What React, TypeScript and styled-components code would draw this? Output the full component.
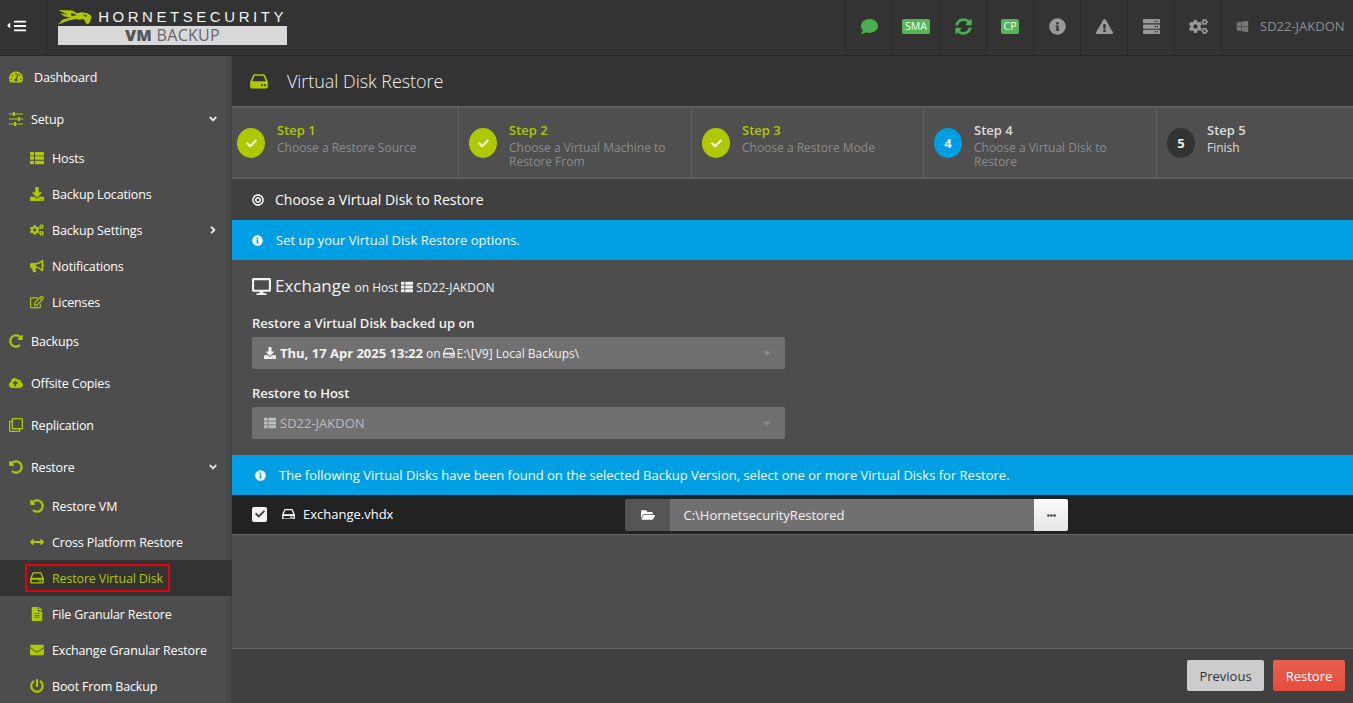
import React from 'react'
import styled, { createGlobalStyle } from 'styled-components'
import {
    FaAngleDown,
    FaAngleRight,
    FaArrowsAltH,
    FaBars,
    FaBullhorn,
    FaBullseye,
    FaCaretDown,
    FaCaretLeft,
    FaCheck,
    FaCloudUploadAlt,
    FaCogs,
    FaComment,
    FaDesktop,
    FaDownload,
    FaEllipsisH,
    FaEnvelope,
    FaExclamationTriangle,
    FaFileAlt,
    FaFolderOpen,
    FaInfoCircle,
    FaPowerOff,
    FaRedoAlt,
    FaRegClone,
    FaRegEdit,
    FaServer,
    FaSyncAlt,
    FaTachometerAlt,
    FaThList,
    FaUndoAlt,
    FaWindows,
} from 'react-icons/fa'

const LIME = '#b0c800'
const BLUE = '#009fe3'
const GREEN = '#4cae4c'

const GlobalStyle = createGlobalStyle`
  html, body {
    margin: 0;
    height: 100%;
    overflow: hidden;
    background: #4d4d4d;
    font-family: "Open Sans", "Liberation Sans", sans-serif;
    font-size: 13px;
    color: #fff;
  }
`

const Page = styled.div`
  width: 1353px;
  height: 703px;
  display: flex;
  flex-direction: column;
  overflow: hidden;
`

const TopBar = styled.header`
  height: 56px;
  flex: none;
  display: flex;
  background: #333;
  border-bottom: 1px solid #2a2a2a;
  box-sizing: border-box;
`

const MenuToggle = styled.div`
  width: 47px;
  display: flex;
  align-items: center;
  justify-content: center;
  font-size: 14px;
  border-right: 1px solid #272727;
  box-sizing: border-box;
  padding: 0 16px 4px 0;

  svg:first-child {
    font-size: 9px;
    margin-right: 0;
  }
`

const Logo = styled.div`
  width: 229px;
  margin: 8px 0 0 11px;
`

const LogoTop = styled.div`
  height: 18px;
  display: flex;
  align-items: center;
  gap: 6px;
`

const LogoName = styled.span`
  font-family: "Liberation Sans", sans-serif;
  font-size: 15px;
  line-height: 18px;
  letter-spacing: 3.55px;
  white-space: nowrap;
  color: #f2f2f2;
`

const LogoBand = styled.div`
  height: 19px;
  background: #d9d9d9;
  color: #666;
  text-align: center;
  font-size: 16px;
  line-height: 18px;
  letter-spacing: 0.3px;

  b {
    font-weight: 800;
    color: #555;
  }
`

const TopCells = styled.div`
  margin-left: auto;
  display: flex;
`

const TopCell = styled.div<{ $color?: string }>`
  width: 47px;
  display: flex;
  align-items: center;
  justify-content: center;
  border-left: 1px solid #292929;
  box-sizing: border-box;
  padding-bottom: 3px;
  font-size: 17px;
  color: ${({ $color }) => $color || '#999'};
`

const HostCell = styled(TopCell)`
  width: 132px;
  justify-content: flex-start;
  padding-left: 14px;
  gap: 11px;
  font-size: 13px;
  color: #8f8f8f;

  svg {
    font-size: 13px;
    color: #777;
  }
`

const Badge = styled.span`
  background: #55b555;
  color: #fff;
  font-size: 10.5px;
  line-height: 15px;
  padding: 0 3px;
  border-radius: 2px;
`

const Content = styled.div`
  flex: 1;
  display: flex;
  min-height: 0;
`

const Sidebar = styled.nav`
  width: 232px;
  flex: none;
  background: #4d4d4d;
  box-shadow: inset -5px 0 5px -4px rgba(0, 0, 0, 0.25);
`

const NavTop = styled.div<{ $indent?: number }>`
  height: 42px;
  display: flex;
  align-items: center;
  padding-left: 9px;
  color: #fff;
  font-size: 12.5px;
  letter-spacing: -0.15px;

  & > svg:first-child {
    width: 14px;
    height: 14px;
    margin-right: ${({ $indent }) => $indent || 8}px;
    color: ${LIME};
  }
`

const NavSub = styled.div<{ $active?: boolean }>`
  height: 36px;
  display: flex;
  align-items: center;
  padding-left: 30px;
  font-size: 12.5px;
  letter-spacing: -0.15px;
  color: ${({ $active }) => ($active ? LIME : '#fff')};
  background: ${({ $active }) => ($active ? '#333' : 'transparent')};
  position: relative;

  & > svg:first-child {
    width: 14px;
    height: 14px;
    margin-right: 8px;
    color: ${LIME};
  }
`

const Highlight = styled.span`
  position: absolute;
  left: 25px;
  top: 4px;
  width: 145px;
  height: 28px;
  box-sizing: border-box;
  border: 2px solid #e8000b;
`

const Chevron = styled.span`
  margin-left: auto;
  margin-right: 13px;
  display: flex;
  color: #e8e8e8;
  font-size: 12px;
`

const Main = styled.main`
  flex: 1;
  min-width: 0;
  display: flex;
  flex-direction: column;
  background: #4d4d4d;
`

const TitleBar = styled.div`
  height: 52px;
  flex: none;
  display: flex;
  align-items: center;
  padding-left: 18px;
  gap: 19px;
  background: #333;
  box-sizing: border-box;
  border-bottom: 2px solid #5e5e5e;
  font-size: 18px;
  font-weight: 300;
  letter-spacing: -0.05px;
  color: #f2f2f2;

  svg {
    width: 18px;
    height: 15px;
    color: ${LIME};
  }
`

const Steps = styled.div`
  height: 71px;
  flex: none;
  display: grid;
  grid-template-columns: 227px 233px 232px 233px 1fr;
  background: #4f4f4f;
  box-sizing: border-box;
  border-bottom: 2px solid #5e5e5e;
`

const Step = styled.div`
  display: flex;
  padding: 14px 0 0 10px;
  gap: 12px;
  border-right: 1px solid #626262;
  box-sizing: border-box;

  &:first-child {
    padding-left: 5px;
  }

  &:last-child {
    border-right: none;
  }
`

const StepDot = styled.div<{ $bg: string }>`
  width: 28px;
  height: 30px;
  margin-top: 6px;
  flex: none;
  border-radius: 50%;
  display: flex;
  align-items: center;
  justify-content: center;
  background: ${({ $bg }) => $bg};
  font-size: 13px;
  font-weight: 700;
  color: #eee;

  svg {
    font-size: 11px;
  }
`

const StepTitle = styled.div<{ $done?: boolean }>`
  font-size: 13px;
  font-weight: 600;
  line-height: 17px;
  color: ${({ $done }) => ($done ? LIME : '#ddd')};
`

const StepText = styled.div<{ $bright?: boolean }>`
  font-size: 12px;
  line-height: 14px;
  margin-top: 2px;
  width: 175px;
  color: ${({ $bright }) => ($bright ? '#ddd' : '#8c8c8c')};
`

const SectionHead = styled.div`
  height: 41px;
  flex: none;
  display: flex;
  align-items: center;
  padding-left: 20px;
  gap: 11px;
  background: #404040;
  font-size: 14px;
  color: #fff;

  svg {
    font-size: 12px;
  }
`

const InfoBar = styled.div<{ $left: number }>`
  height: 40px;
  flex: none;
  display: flex;
  align-items: center;
  padding-left: ${({ $left }) => $left}px;
  gap: 13px;
  background: ${BLUE};
  font-size: 13px;
  color: #f4fbff;

  svg {
    font-size: 11px;
  }
`

const Form = styled.div`
  height: 195px;
  flex: none;
  padding: 14px 20px 0;
  box-sizing: border-box;
`

const VmTitle = styled.div`
  display: flex;
  align-items: baseline;
  height: 25px;
  font-size: 12px;
  color: #f2f2f2;

  svg {
    align-self: center;
  }
`

const VmName = styled.span`
  font-size: 17px;
  margin: 0 4px 0 4px;
`

const HostIcon = styled(FaThList)`
  font-size: 12px;
  margin: 0 3px;
`

const FieldLabel = styled.div`
  font-size: 13px;
  font-weight: 600;
  line-height: 18px;
  color: #f2f2f2;
  margin: 15px 0 5px;
`

const SelectBox = styled.div<{ $disabled?: boolean }>`
  width: 533px;
  height: 32px;
  display: flex;
  align-items: center;
  padding: 0 12px;
  gap: 3px;
  box-sizing: border-box;
  background: #707070;
  border-radius: 2px;
  font-size: ${({ $disabled }) => ($disabled ? '13px' : '12px')};
  color: ${({ $disabled }) => ($disabled ? '#bdbdbd' : '#f2f2f2')};

  b {
    font-size: 13px;
    font-weight: 700;
  }

  svg {
    font-size: 12px;
  }

  & > svg:first-child {
    margin-right: 1px;
  }

  & > svg:last-child {
    margin-left: auto;
    color: #8c8c8c;
  }
`

const SelectDisk = styled.span`
  display: flex;
  margin: 0 -1px;
`

const DiskRow = styled.div`
  height: 40px;
  flex: none;
  display: flex;
  align-items: center;
  padding: 0 0 1px 20px;
  background: #222;
  border-bottom: 1px solid #666;
  box-sizing: border-box;
  font-size: 13px;
`

const CheckBox = styled.span`
  width: 15px;
  height: 15px;
  border-radius: 2px;
  background: #f4f4f4;
  color: #444;
  display: flex;
  align-items: center;
  justify-content: center;
  font-size: 10px;
  margin-right: 15px;
`

const DiskGlyph = styled.span`
  display: flex;
  margin-right: 8px;
`

const PathGroup = styled.div`
  margin: 2px 0 0 232px;
  width: 443px;
  height: 32px;
  display: flex;
  border-radius: 2px;
  overflow: hidden;
`

const PathIcon = styled.span`
  width: 45px;
  background: #555;
  display: flex;
  align-items: center;
  justify-content: center;
  font-size: 14px;
`

const PathInput = styled.span`
  flex: 1;
  background: #707070;
  line-height: 32px;
  padding-left: 13px;
  color: #f2f2f2;
`

const PathButton = styled.span`
  width: 34px;
  background: linear-gradient(#fafafa, #e6e6e6);
  color: #444;
  display: flex;
  align-items: center;
  justify-content: center;
  font-size: 9px;
`

const Spacer = styled.div`
  flex: 1;
`

const Footer = styled.div`
  height: 55px;
  flex: none;
  display: flex;
  justify-content: flex-end;
  align-items: flex-start;
  padding: 11px 8px 0 0;
  gap: 9px;
  box-sizing: border-box;
  background: #404040;
  border-top: 1px solid #666;
`

const Button = styled.button<{ $primary?: boolean }>`
  height: 31px;
  width: ${({ $primary }) => ($primary ? '72px' : '77px')};
  padding: 0;
  border: none;
  border-radius: 2px;
  font-family: inherit;
  font-size: 13px;
  color: ${({ $primary }) => ($primary ? '#fff' : '#333')};
  background: ${({ $primary }) =>
        $primary ? 'linear-gradient(#e8604f, #e54d3a)' : '#cccccc'};
`

const Hornet = () => (
    <svg width="36" height="17" viewBox="0 0 36 17">
        <path
            fill={LIME}
            d="M0.5 0.5 L15 1 L20 4 L25 3 L31 4 L35.5 7 L33.5 14 L30.5 16 L27 10 L23 11 L19 10 L12 11.5 L0 16 L5 10.5 L13 8.5 L7 7.5 L2 4 L10 5.5 Z"
        />
        <path fill="#333" d="M14 3.5 L20 6 L14 7 Z M26 5 L30.5 6 L29.5 8 Z" />
    </svg>
)

const HddIcon = ({ size = 13, solid = false }: { size?: number; solid?: boolean }) => (
    <svg width={size} height={(size * 15) / 18} viewBox="0 0 18 15">
        <path
            fill="none"
            stroke="currentColor"
            strokeWidth="1.7"
            strokeLinejoin="round"
            d="M4 1 H14 L17 8 H1 Z"
        />
        {solid ? (
            <path
                fill="currentColor"
                fillRule="evenodd"
                d="M0.2 8 H17.8 V13 Q17.8 14.6 16 14.6 H2 Q0.2 14.6 0.2 13 Z M11 10.2 V12 H12.8 V10.2 Z M14 10.2 V12 H15.8 V10.2 Z"
            />
        ) : (
            <path
                fill="currentColor"
                fillRule="evenodd"
                d="M0.2 8 H17.8 V13 Q17.8 14.6 16 14.6 H2 Q0.2 14.6 0.2 13 Z M2 9.6 V13 H16 V9.6 Z M11 10.6 H15 V12 H11 Z"
            />
        )}
    </svg>
)

const SlidersIcon = () => (
    <svg viewBox="0 0 14 14">
        <path fill="currentColor" d="M0 1.5 H14 V2.5 H0 Z M0 6.5 H14 V7.5 H0 Z M0 11.5 H14 V12.5 H0 Z" />
        <path fill="currentColor" d="M4 0 H6 V4 H4 Z M9 5 H11 V9 H9 Z M5 10 H7 V14 H5 Z" />
    </svg>
)

const subSetup = [
    { icon: <FaThList />, label: 'Hosts' },
    { icon: <FaDownload />, label: 'Backup Locations' },
    { icon: <FaCogs />, label: 'Backup Settings', more: true },
    { icon: <FaBullhorn />, label: 'Notifications' },
    { icon: <FaRegEdit />, label: 'Licenses' },
]

const subRestoreAfter = [
    { icon: <FaFileAlt />, label: 'File Granular Restore' },
    { icon: <FaEnvelope />, label: 'Exchange Granular Restore' },
    { icon: <FaPowerOff />, label: 'Boot From Backup' },
]

const steps = [
    { title: 'Step 1', text: 'Choose a Restore Source', done: true },
    { title: 'Step 2', text: 'Choose a Virtual Machine to Restore From', done: true },
    { title: 'Step 3', text: 'Choose a Restore Mode', done: true },
    { title: 'Step 4', text: 'Choose a Virtual Disk to Restore', num: 4, bg: BLUE },
    { title: 'Step 5', text: 'Finish', num: 5, bg: '#333', bright: true },
]

export default function App() {
    return (
        <Page>
            <GlobalStyle />
            <TopBar>
                <MenuToggle>
                    <FaCaretLeft />
                    <FaBars />
                </MenuToggle>
                <Logo>
                    <LogoTop>
                        <Hornet />
                        <LogoName>HORNETSECURITY</LogoName>
                    </LogoTop>
                    <LogoBand>
                        <b>VM</b> BACKUP
                    </LogoBand>
                </Logo>
                <TopCells>
                    <TopCell $color={GREEN}><FaComment /></TopCell>
                    <TopCell><Badge>SMA</Badge></TopCell>
                    <TopCell $color={GREEN}><FaSyncAlt /></TopCell>
                    <TopCell><Badge>CP</Badge></TopCell>
                    <TopCell><FaInfoCircle /></TopCell>
                    <TopCell><FaExclamationTriangle /></TopCell>
                    <TopCell><FaServer /></TopCell>
                    <TopCell><FaCogs size={19} /></TopCell>
                    <HostCell><FaWindows />SD22-JAKDON</HostCell>
                </TopCells>
            </TopBar>
            <Content>
                <Sidebar>
                    <NavTop $indent={11}><FaTachometerAlt />Dashboard</NavTop>
                    <NavTop>
                        <SlidersIcon />Setup
                        <Chevron><FaAngleDown /></Chevron>
                    </NavTop>
                    {subSetup.map((item) => (
                        <NavSub key={item.label}>
                            {item.icon}
                            {item.label}
                            {item.more && <Chevron><FaAngleRight /></Chevron>}
                        </NavSub>
                    ))}
                    <NavTop><FaRedoAlt />Backups</NavTop>
                    <NavTop><FaCloudUploadAlt />Offsite Copies</NavTop>
                    <NavTop><FaRegClone />Replication</NavTop>
                    <NavTop>
                        <FaUndoAlt />Restore
                        <Chevron><FaAngleDown /></Chevron>
                    </NavTop>
                    <NavSub><FaUndoAlt />Restore VM</NavSub>
                    <NavSub><FaArrowsAltH />Cross Platform Restore</NavSub>
                    <NavSub $active>
                        <HddIcon />Restore Virtual Disk
                        <Highlight />
                    </NavSub>
                    {subRestoreAfter.map((item) => (
                        <NavSub key={item.label}>
                            {item.icon}
                            {item.label}
                        </NavSub>
                    ))}
                </Sidebar>
                <Main>
                    <TitleBar><HddIcon size={18} solid />Virtual Disk Restore</TitleBar>
                    <Steps>
                        {steps.map((step) => (
                            <Step key={step.title}>
                                <StepDot $bg={step.bg || LIME}>
                                    {step.done ? <FaCheck /> : step.num}
                                </StepDot>
                                <div>
                                    <StepTitle $done={step.done}>{step.title}</StepTitle>
                                    <StepText $bright={step.bright}>{step.text}</StepText>
                                </div>
                            </Step>
                        ))}
                    </Steps>
                    <SectionHead><FaBullseye />Choose a Virtual Disk to Restore</SectionHead>
                    <InfoBar $left={20}>
                        <FaInfoCircle />Set up your Virtual Disk Restore options.
                    </InfoBar>
                    <Form>
                        <VmTitle>
                            <FaDesktop size={19} />
                            <VmName>Exchange</VmName>
                            on Host
                            <HostIcon />
                            SD22-JAKDON
                        </VmTitle>
                        <FieldLabel>Restore a Virtual Disk backed up on</FieldLabel>
                        <SelectBox>
                            <FaDownload />
                            <b>Thu, 17 Apr 2025 13:22</b>
                            on
                            <SelectDisk><HddIcon size={12} /></SelectDisk>
                            E:\[V9] Local Backups\
                            <FaCaretDown />
                        </SelectBox>
                        <FieldLabel>Restore to Host</FieldLabel>
                        <SelectBox $disabled>
                            <FaThList />
                            SD22-JAKDON
                            <FaCaretDown />
                        </SelectBox>
                    </Form>
                    <InfoBar $left={23}>
                        <FaInfoCircle />
                        The following Virtual Disks have been found on the selected Backup Version, select one or more Virtual Disks for Restore.
                    </InfoBar>
                    <DiskRow>
                        <CheckBox><FaCheck /></CheckBox>
                        <DiskGlyph><HddIcon /></DiskGlyph>
                        Exchange.vhdx
                        <PathGroup>
                            <PathIcon><FaFolderOpen /></PathIcon>
                            <PathInput>C:\HornetsecurityRestored</PathInput>
                            <PathButton><FaEllipsisH /></PathButton>
                        </PathGroup>
                    </DiskRow>
                    <Spacer />
                    <Footer>
                        <Button>Previous</Button>
                        <Button $primary>Restore</Button>
                    </Footer>
                </Main>
            </Content>
        </Page>
    )
}
